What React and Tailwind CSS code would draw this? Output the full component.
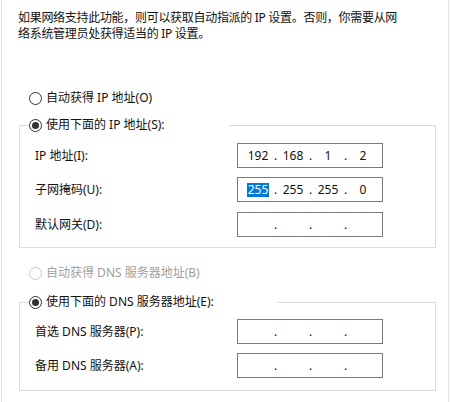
import React from "react";

const FONT = { fontFamily: '"Noto Sans", "Noto Sans CJK SC", sans-serif' };

function Radio({ checked, disabled }) {
  return (
    <span
      className={
        disabled
          ? "flex h-[13px] w-[13px] shrink-0 items-center justify-center rounded-full border border-[#c8c8c8] bg-white"
          : "flex h-[13px] w-[13px] shrink-0 items-center justify-center rounded-full border border-[#333333] bg-white"
      }
    >
      {checked && <span className="h-[7px] w-[7px] rounded-full bg-[#333333]" />}
    </span>
  );
}

function IpBox({ fields, selectFirst }) {
  return (
    <div className="flex h-[25px] w-[146px] items-center border border-[#7a7a7a] bg-white pl-[6px] text-[12px] text-[#111]">
      {fields.map((f, i) => (
        <React.Fragment key={i}>
          <span className="flex w-[28px] justify-center">
            {i === 0 && selectFirst ? (
              <span className="flex h-[14px] items-center bg-[#0078d7] px-[1px] text-white">{f}</span>
            ) : (
              <span>{f}</span>
            )}
          </span>
          {i < 3 && <span className="w-[7px] text-center">.</span>}
        </React.Fragment>
      ))}
    </div>
  );
}

function Row({ label, fields, selectFirst, className }) {
  return (
    <div className={"flex items-center " + (className || "")}>
      <span className="w-[202px] text-[12px] text-[#111]">{label}</span>
      <IpBox fields={fields} selectFirst={selectFirst} />
    </div>
  );
}

export default function App() {
  return (
    <div className="h-[402px] w-[450px] overflow-hidden bg-white" style={FONT}>
      <div className="ml-[1px] h-full w-[448px] border-x border-[#e2e2e2] pt-[10px]">
        <p className="whitespace-nowrap pl-[16px] text-[12px] leading-[16px] tracking-[-0.3px] text-[#111]">
          如果网络支持此功能，则可以获取自动指派的 IP 设置。否则，你需要从网
          <br />
          络系统管理员处获得适当的 IP 设置。
        </p>

        <div className="mt-[48px] flex h-[16px] items-center gap-[4px] pl-[27px] text-[12px] text-[#111]">
          <Radio />
          <span>自动获得 IP 地址(O)</span>
        </div>

        <fieldset className="ml-[17px] mt-[11px] w-[417px] border border-[#dcdcdc] pb-[10px] pl-[15px]">
          <legend className="-ml-[6px] w-[200px]">
            <span className="flex h-[16px] items-center gap-[4px] text-[12px] text-[#111]">
              <Radio checked />
              <span>使用下面的 IP 地址(S):</span>
            </span>
          </legend>
          <Row className="mt-[10px]" label="IP 地址(I):" fields={["192", "168", "1", "2"]} />
          <Row className="mt-[9px]" label="子网掩码(U):" fields={["255", "255", "255", "0"]} selectFirst />
          <Row className="mt-[10px]" label="默认网关(D):" fields={["", "", "", ""]} />
        </fieldset>

        <div className="mt-[17px] flex h-[16px] items-center gap-[4px] pl-[27px] text-[12px] text-[#a0a0a0]">
          <Radio disabled />
          <span>自动获得 DNS 服务器地址(B)</span>
        </div>

        <fieldset className="ml-[17px] mt-[13px] w-[417px] border border-[#dcdcdc] pb-[12px] pl-[15px]">
          <legend className="-ml-[6px] w-[248px]">
            <span className="flex h-[16px] items-center gap-[4px] text-[12px] text-[#111]">
              <Radio checked />
              <span>使用下面的 DNS 服务器地址(E):</span>
            </span>
          </legend>
          <Row className="mt-[9px]" label="首选 DNS 服务器(P):" fields={["", "", "", ""]} />
          <Row className="mt-[9px]" label="备用 DNS 服务器(A):" fields={["", "", "", ""]} />
        </fieldset>
      </div>
    </div>
  );
}
